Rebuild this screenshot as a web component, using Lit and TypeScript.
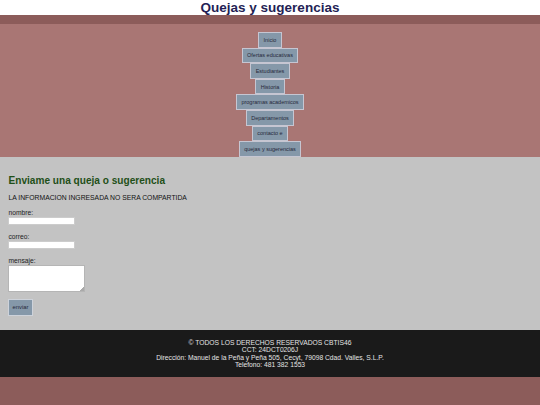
import { LitElement, html, css } from "lit";
import { customElement } from "lit/decorators.js";

const links = ["Inicio", "Ofertas educativas", "Estudiantes", "Historia", "programas academicos", "Departamentos", "contacto e", "quejas y sugerencias"];

@customElement("app-root")
export class AppRoot extends LitElement {
  static styles = css`
    :host { display: block; width: 540px; height: 405px; background: #8c5c5a; font-family: "Liberation Sans", Arial, sans-serif; overflow: hidden; }
    header { height: 15px; background: #fff; text-align: center; font-size: 13.5px; line-height: 15px; font-weight: 700; color: #241f55; }
    .band { height: 9px; }
    nav { height: 125px; padding-top: 8px; background: #a97674; display: flex; flex-direction: column; align-items: center; }
    nav a { box-sizing: border-box; height: 15.6px; padding: 0 4.5px; display: flex; align-items: center; background: #8598a9; border: 1px solid #c6c6d2; color: #26283a; font-size: 5.5px; white-space: nowrap; flex: none; }
    main { box-sizing: border-box; height: 173px; padding: 17px 8px 0; background: #c3c3c3; display: flex; flex-direction: column; align-items: flex-start; color: #111; }
    h2 { margin: 0 0 0 0.5px; font-size: 10.1px; line-height: 13px; color: #1f4f18; font-weight: 700; }
    p { margin: 7px 0 0 0.5px; font-size: 6.8px; line-height: 8px; }
    label { font-size: 6.7px; line-height: 8px; margin: 7.5px 0 0 0.5px; display: block; color: #222; }
    label.first { margin-top: 6.5px; }
    .field { width: 67px; height: 8.5px; background: #fff; border: 0.5px solid #ccc; box-sizing: border-box; }
    .area { position: relative; width: 77px; height: 27px; background: #fff; border: 0.5px solid #b5b5b5; box-sizing: border-box; }
    .grip { position: absolute; right: 0; bottom: 0; width: 4px; height: 4px; background: linear-gradient(135deg, transparent 50%, #aaa 50%); }
    button { margin-top: 7.5px; box-sizing: border-box; width: 25px; height: 16.5px; padding: 0; background: #8598a9; border: 1px solid #cdd2da; color: #26283a; font: 5.8px "Liberation Sans", Arial, sans-serif; }
    footer { box-sizing: border-box; height: 47px; padding-top: 8.5px; background: #1a1a1a; color: #e4e4e4; text-align: center; font-size: 6.72px; line-height: 7.6px; }
  `;

  render() {
    return html`
      <header>Quejas y sugerencias</header>
      <div class="band"></div>
      <nav>${links.map((l) => html`<a>${l}</a>`)}</nav>
      <main>
        <h2>Enviame una queja o sugerencia</h2>
        <p>LA INFORMACION INGRESADA NO SERA COMPARTIDA</p>
        <label class="first">nombre:</label>
        <div class="field"></div>
        <label>correo:</label>
        <div class="field"></div>
        <label>mensaje:</label>
        <div class="area"><div class="grip"></div></div>
        <button>enviar</button>
      </main>
      <footer>
        <div>© TODOS LOS DERECHOS RESERVADOS CBTIS46</div>
        <div>CCT: 24DCT0206J</div>
        <div>Dirección: Manuel de la Peña y Peña 505, Cecyt, 79098 Cdad. Valles, S.L.P.</div>
        <div>Telefono: 481 382 1553</div>
      </footer>
    `;
  }
}
